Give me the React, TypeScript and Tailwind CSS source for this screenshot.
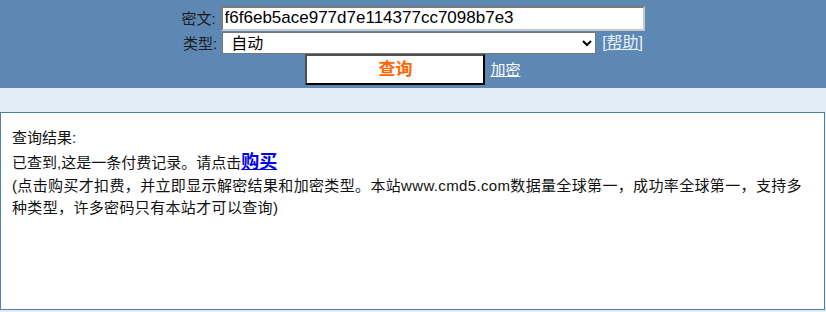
import React from "react";

export default function App() {
  const font = { fontFamily: '"Liberation Sans", "Noto Sans CJK SC", sans-serif' };
  return (
    <div className="w-[826px] h-[312px] bg-[#e0ecf6] overflow-hidden" style={font}>
      <div className="h-[88px] bg-[#5c88b3] pt-[5px]">
        <div className="flex justify-center items-center h-[26px]">
          <span className="text-[15px] text-[#1c1c1c] leading-none">密文:</span>
          <input
            className="ml-[5px] w-[424px] h-[25px] bg-white border-2 border-t-[#7a7a7a] border-l-[#7a7a7a] border-b-[#c8c8c8] border-r-[#c8c8c8] px-[2px] text-[17px] text-black outline-none"
            style={font}
            defaultValue="f6f6eb5ace977d7e114377cc7098b7e3"
          />
        </div>
        <div className="flex justify-center items-center h-[22px] mt-[1px]">
          <span className="text-[15px] text-[#1c1c1c] leading-none">类型:</span>
          <select
            className="ml-[5px] w-[374px] h-[22px] bg-white border border-[#767676] text-[16px] text-black pl-[4px]"
            style={font}
            defaultValue="auto"
          >
            <option value="auto">自动</option>
          </select>
          <span className="ml-[6px] text-[16px] text-[#e8f0ff] leading-none">
            [<span className="underline">帮助</span>]
          </span>
        </div>
        <div className="flex justify-center items-center h-[31px]">
          <button
            className="w-[180px] h-[31px] bg-white border-2 border-t-[#505050] border-l-[#505050] border-b-black border-r-black text-[17px] font-bold text-[#ff6600] leading-none"
            style={font}
          >
            查询
          </button>
          <span className="ml-[5px] text-[15px] text-white underline leading-none">加密</span>
        </div>
      </div>
      <div className="h-[24px]" />
      <div className="w-[825px] h-[198px] bg-white border border-[#4f7fae] pt-[13px] pl-[11px] pr-[12px] text-[15px] text-[#111]">
        <div className="leading-[24px]">查询结果:</div>
        <div className="leading-[25px]">
          已查到,这是一条付费记录。请点击
          <span className="text-[18px] font-bold text-[#0000ee] underline">购买</span>
        </div>
        <div className="leading-[22px] tracking-[0.35px]">
          (点击购买才扣费，并立即显示解密结果和加密类型。本站www.cmd5.com数据量全球第一，成功率全球第一，支持多种类型，许多密码只有本站才可以查询)
        </div>
      </div>
    </div>
  );
}
